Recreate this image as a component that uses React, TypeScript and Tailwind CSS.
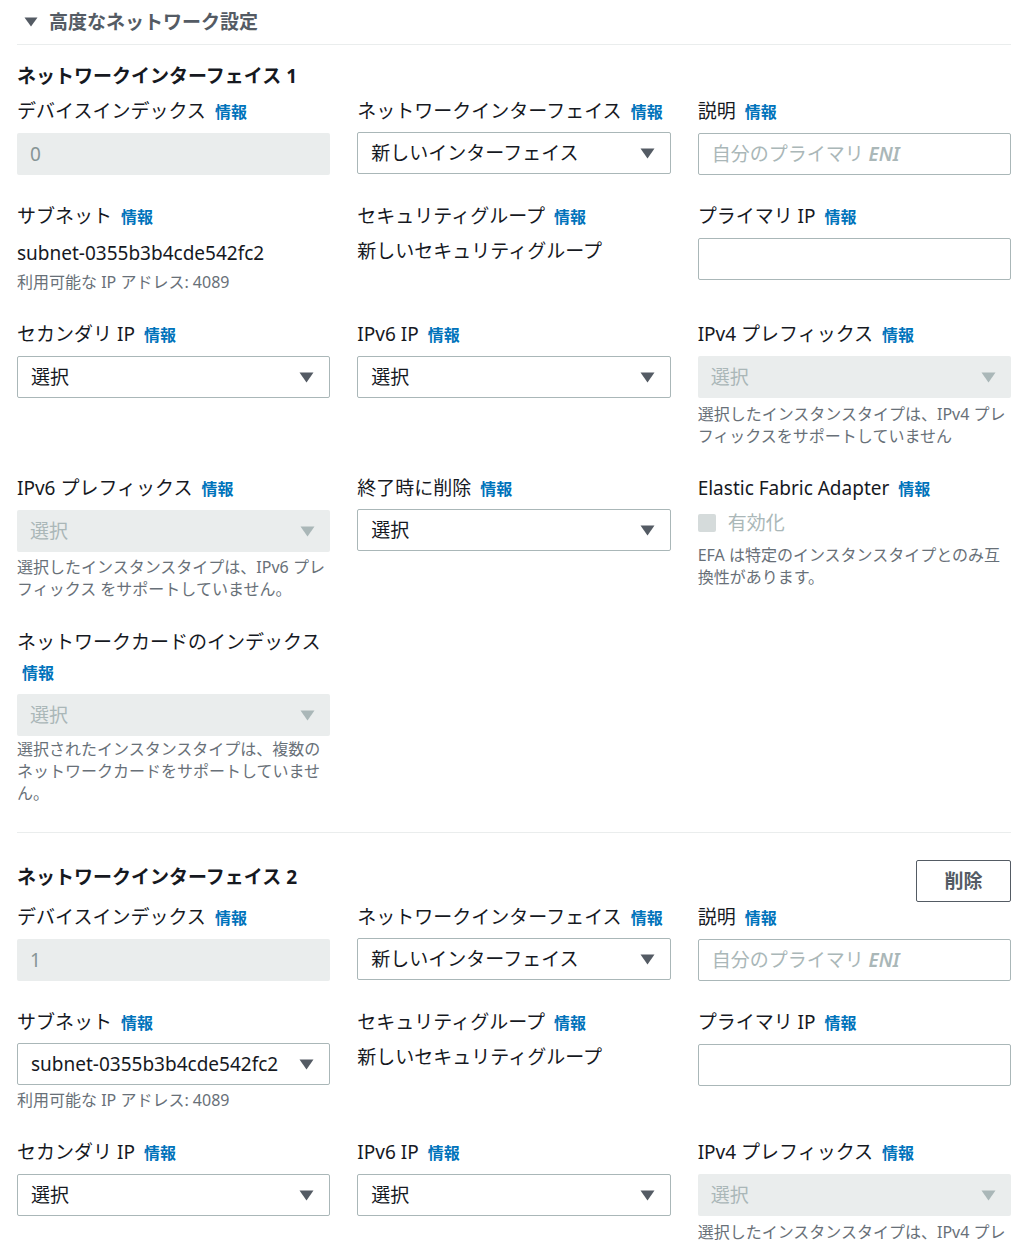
import React from 'react';

const FONT = "font-['Noto_Sans','Noto_Sans_CJK_JP',sans-serif]";

function Label({ text, wrap }: { text: string; wrap?: boolean }) {
  return (
    <div className={`text-[19px] leading-[30px] text-[#16191f] ${wrap ? '' : 'whitespace-nowrap'}`}>
      {text}
      <span className={`${wrap ? 'ml-[5px]' : 'ml-[9px]'} text-[16px] font-bold text-[#0073bb]`}>情報</span>
    </div>
  );
}

function Arrow({ disabled }: { disabled?: boolean }) {
  return (
    <svg width="15" height="11" viewBox="0 0 15 11" className="shrink-0">
      <path d="M0.5 0.5 H14.5 L7.5 10.5 Z" fill={disabled ? '#aab7b8' : '#545b64'} />
    </svg>
  );
}

function Select({ value, disabled, className = 'mt-[6px]' }: { value: string; disabled?: boolean; className?: string }) {
  return (
    <div
      className={`${className} h-[42px] flex items-center justify-between pl-[13px] pr-[15px] rounded-[2px] text-[19px] ${
        disabled ? 'bg-[#eaeded] text-[#aab7b8]' : 'bg-white border border-[#aab7b8] text-[#16191f]'
      }`}
    >
      <span>{value}</span>
      <Arrow disabled={disabled} />
    </div>
  );
}

function Input({ value, placeholder, disabled }: { value?: string; placeholder?: boolean; disabled?: boolean }) {
  return (
    <div
      className={`mt-[6px] h-[42px] flex items-center px-[13px] rounded-[2px] text-[19px] ${
        disabled ? 'bg-[#eaeded] text-[#879596]' : 'bg-white border border-[#aab7b8] text-[#16191f]'
      }`}
    >
      {value && <span>{value}</span>}
      {placeholder && (
        <span className="text-[#aab7b8]">
          自分のプライマリ <span className="italic font-semibold">ENI</span>
        </span>
      )}
    </div>
  );
}

function Help({ children, className = '' }: { children: React.ReactNode; className?: string }) {
  return <div className={`text-[16px] leading-[22px] text-[#687078] ${className}`}>{children}</div>;
}

function Row({ children, className = '' }: { children: React.ReactNode; className?: string }) {
  return <div className={`grid grid-cols-3 gap-x-[27px] ${className}`}>{children}</div>;
}

function InterfaceBlock({ index, removable }: { index: number; removable?: boolean }) {
  return (
    <div>
      {/* header */}
      {removable ? (
        <div className="flex justify-between items-start pt-[27px]">
          <h2 className="pt-[4px] text-[19px] leading-[26px] font-bold text-[#16191f]">ネットワークインターフェイス {index}</h2>
          <button className="h-[42px] w-[95px] border border-[#545b64] rounded-[2px] text-[19px] font-bold text-[#545b64] bg-white">
            削除
          </button>
        </div>
      ) : (
        <h2 className="mt-[18px] mb-[7px] text-[19px] leading-[26px] font-bold text-[#16191f]">ネットワークインターフェイス {index}</h2>
      )}

      {/* row 1 */}
      <Row>
        <div>
          <Label text="デバイスインデックス" />
          <Input value={String(index - 1)} disabled />
        </div>
        <div>
          <Label text="ネットワークインターフェイス" />
          <Select value="新しいインターフェイス" className="mt-[5px]" />
        </div>
        <div>
          <Label text="説明" />
          <Input placeholder />
        </div>
      </Row>

      {/* row 2 */}
      <Row className="mt-[26px]">
        <div>
          <Label text="サブネット" />
          {removable ? (
            <Select value="subnet-0355b3b4cde542fc2" className="mt-[5px]" />
          ) : (
            <div className="mt-[8px] text-[19px] leading-[26px] text-[#16191f]">subnet-0355b3b4cde542fc2</div>
          )}
          <Help className={removable ? 'mt-[4px]' : 'mt-[5px]'}>利用可能な IP アドレス: 4089</Help>
        </div>
        <div>
          <Label text="セキュリティグループ" />
          <div className="mt-[6px] text-[19px] leading-[26px] text-[#16191f]">新しいセキュリティグループ</div>
        </div>
        <div>
          <Label text="プライマリ IP" />
          <Input />
        </div>
      </Row>

      {/* row 3 */}
      <Row className="mt-[26px]">
        <div>
          <Label text="セカンダリ IP" />
          <Select value="選択" />
        </div>
        <div>
          <Label text="IPv6 IP" />
          <Select value="選択" />
        </div>
        <div>
          <Label text="IPv4 プレフィックス" />
          <Select value="選択" disabled />
          <Help className="mt-[5px]">選択したインスタンスタイプは、IPv4 プレフィックスをサポートしていません</Help>
        </div>
      </Row>

      {/* row 4 */}
      <Row className="mt-[26px]">
        <div>
          <Label text="IPv6 プレフィックス" />
          <Select value="選択" disabled />
          <Help className="mt-[4px]">選択したインスタンスタイプは、IPv6 プレフィックス をサポートしていません。</Help>
        </div>
        <div>
          <Label text="終了時に削除" />
          <Select value="選択" className="mt-[5px]" />
        </div>
        <div>
          <Label text="Elastic Fabric Adapter" />
          <div className="mt-[6px] flex items-center h-[26px] gap-[12px]">
            <span className="w-[18px] h-[18px] rounded-[2px] bg-[#d5dbdb]" />
            <span className="text-[19px] text-[#aab7b8]">有効化</span>
          </div>
          <Help className="mt-[8px]">EFA は特定のインスタンスタイプとのみ互換性があります。</Help>
        </div>
      </Row>

      {/* row 5 */}
      <Row className="mt-[27px]">
        <div>
          <Label text="ネットワークカードのインデックス" wrap />
          <Select value="選択" disabled />
          <Help className="mt-[2px]">選択されたインスタンスタイプは、複数のネットワークカードをサポートしていません。</Help>
        </div>
        <div />
        <div />
      </Row>
    </div>
  );
}

export default function App() {
  return (
    <div className={`${FONT} bg-white h-[1241px] overflow-hidden pl-[17px] pr-[8px]`}>
      <div className="h-[45px] flex items-center border-b border-[#eaeded]">
        <svg width="14" height="10" viewBox="0 0 14 10" className="ml-[7px] mr-[11px]">
          <path d="M0.5 0.5 H13.5 L7 9.5 Z" fill="#545b64" />
        </svg>
        <span className="text-[19px] font-bold text-[#545b64]">高度なネットワーク設定</span>
      </div>

      <div className="pb-[28px] border-b border-[#eaeded]">
        <InterfaceBlock index={1} />
      </div>

      <InterfaceBlock index={2} removable />
    </div>
  );
}
